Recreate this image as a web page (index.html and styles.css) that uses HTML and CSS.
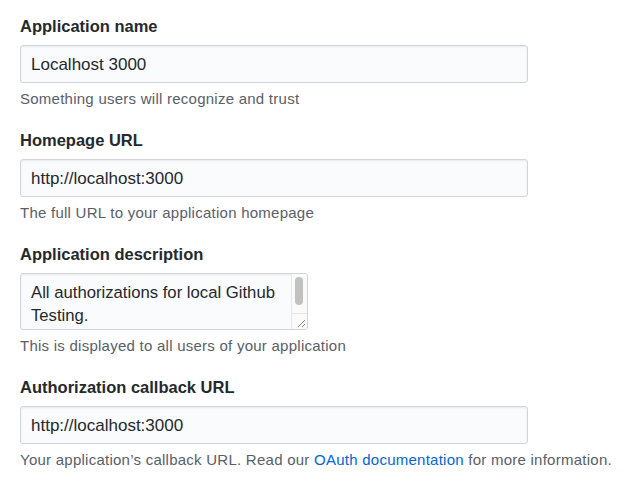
FILE: index.html
```html
<!DOCTYPE html>
<html lang="en">
<head>
<meta charset="utf-8">
<title>Register OAuth application</title>
<link rel="stylesheet" href="styles.css">
</head>
<body>
<form class="form">
  <div class="group">
    <label class="label" for="name">Application name</label>
    <input class="field" id="name" type="text" value="Localhost 3000">
    <p class="note">Something users will recognize and trust</p>
  </div>
  <div class="group">
    <label class="label" for="home">Homepage URL</label>
    <input class="field" id="home" type="text" value="http://localhost:3000">
    <p class="note">The full URL to your application homepage</p>
  </div>
  <div class="group">
    <label class="label" for="desc">Application description</label>
    <div class="area-wrap">
      <textarea class="area" id="desc">All authorizations for local Github Testing.</textarea>
      <div class="scrollbar" aria-hidden="true">
        <div class="track"><div class="thumb"></div></div>
        <div class="resizer">
          <svg width="15" height="15" viewBox="0 0 15 15"><path d="M13 6 L6 13 M13 10 L10 13" stroke="#8a8a8a" stroke-width="1" fill="none"/></svg>
        </div>
      </div>
    </div>
    <p class="note">This is displayed to all users of your application</p>
  </div>
  <div class="group">
    <label class="label" for="cb">Authorization callback URL</label>
    <input class="field" id="cb" type="text" value="http://localhost:3000">
    <p class="note">Your application’s callback URL. Read our <a class="link" href="#">OAuth documentation</a> for more information.</p>
  </div>
</form>
</body>
</html>
```
FILE: styles.css
```css
html, body {
  margin: 0;
  padding: 0;
  background: #ffffff;
}
body {
  font-family: "Liberation Sans", Arial, sans-serif;
  color: #24292e;
}
.form {
  padding: 16px 20px 0 20px;
}
.group {
  margin-bottom: 21px;
}
.label {
  display: block;
  font-size: 16.5px;
  font-weight: 700;
  line-height: 20px;
  margin-bottom: 9px;
}
.field {
  display: block;
  box-sizing: border-box;
  width: 508px;
  height: 38px;
  margin: 0;
  padding: 1px 10px 0 10px;
  font-family: inherit;
  font-size: 17px;
  color: #24292e;
  background: #fafbfc;
  border: 1px solid #d1d5da;
  border-radius: 3px;
  box-shadow: inset 0 1px 2px rgba(27,31,35,0.075);
  outline: none;
}
.area-wrap {
  position: relative;
  width: 288px;
  height: 57px;
}
.area {
  display: block;
  box-sizing: border-box;
  width: 288px;
  height: 57px;
  margin: 0;
  padding: 7px 20px 0 10px;
  font-family: inherit;
  font-size: 16.7px;
  line-height: 23px;
  color: #24292e;
  background: #fafbfc;
  border: 1px solid #d1d5da;
  border-radius: 3px;
  box-shadow: inset 0 1px 2px rgba(27,31,35,0.075);
  overflow: hidden;
  resize: none;
  outline: none;
}
.scrollbar {
  position: absolute;
  top: 1px;
  right: 1px;
  bottom: 1px;
  width: 15px;
  display: flex;
  flex-direction: column;
  background: #fafafa;
  border-left: 1px solid #e6e6e6;
  border-radius: 0 2px 2px 0;
}
.track {
  flex: 1;
  padding: 3px 3px 0 3px;
}
.thumb {
  width: 8px;
  height: 28px;
  background: #c1c1c1;
  border-radius: 4px;
}
.resizer {
  height: 15px;
  border-top: 1px solid #e6e6e6;
  display: flex;
}
.note {
  margin: 6px 0 0 0;
  font-size: 15px;
  letter-spacing: 0.25px;
  line-height: 20px;
  color: #586069;
  white-space: nowrap;
}
.link {
  color: #0366d6;
  text-decoration: none;
}
```
